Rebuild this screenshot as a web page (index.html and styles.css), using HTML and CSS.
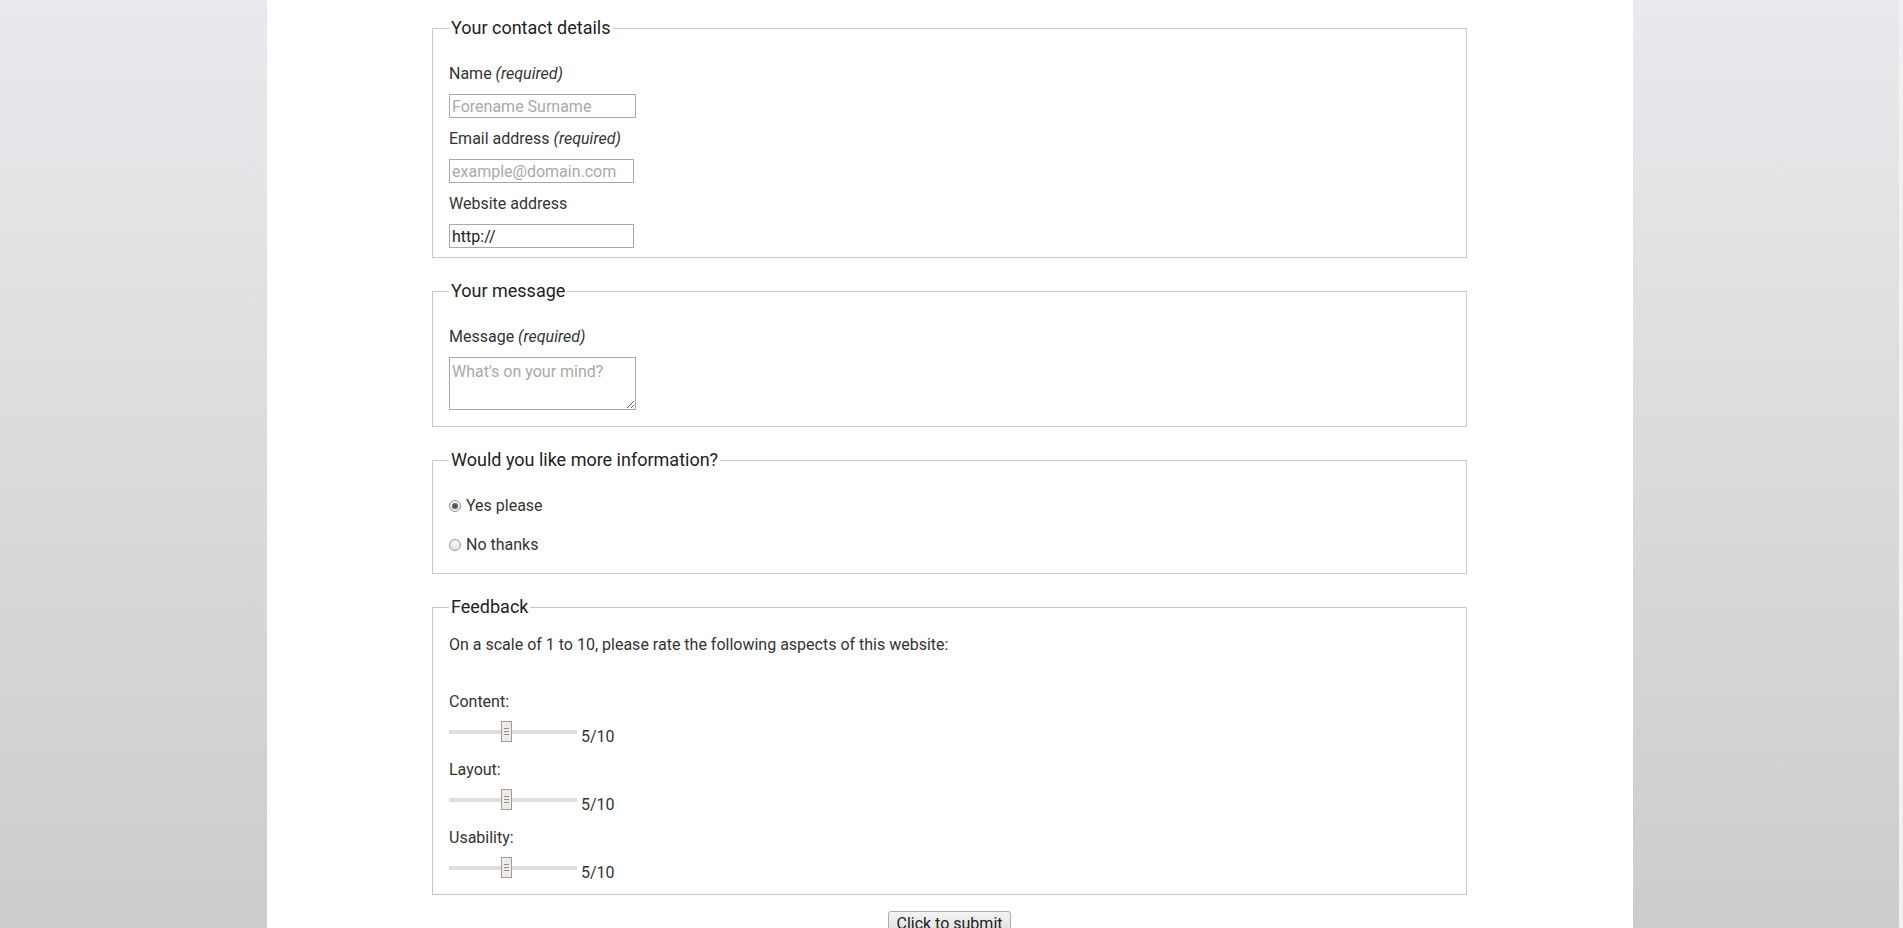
FILE: index.html
```html
<!DOCTYPE html>
<html lang="en">
<head>
  <meta charset="UTF-8" />
  <meta name="viewport" content="width=device-width, initial-scale=1.0"/>
  <title>Contact form</title>
  <link rel="stylesheet" href="styles.css">
</head>
<body>

  <div class="page">
    <form class="contact-form" action="#">

      <!-- Contact details -->
      <fieldset>
        <legend>Your contact details</legend>
        <div class="field">
          <label for="name">Name <em>(required)</em></label>
          <input type="text" id="name" class="text-input name-input" placeholder="Forename Surname">
        </div>
        <div class="field">
          <label for="email">Email address <em>(required)</em></label>
          <input type="email" id="email" class="text-input" placeholder="example@domain.com">
        </div>
        <div class="field">
          <label for="website">Website address</label>
          <input type="url" id="website" class="text-input" value="http://">
        </div>
      </fieldset>

      <!-- Message -->
      <fieldset>
        <legend>Your message</legend>
        <div class="field">
          <label for="message">Message <em>(required)</em></label>
          <textarea id="message" class="message-input" placeholder="What's on your mind?"></textarea>
        </div>
      </fieldset>

      <!-- More information -->
      <fieldset>
        <legend>Would you like more information?</legend>
        <div class="choices">
          <label class="choice"><input type="radio" name="info" class="radio" checked> Yes please</label>
          <label class="choice"><input type="radio" name="info" class="radio"> No thanks</label>
        </div>
      </fieldset>

      <!-- Feedback -->
      <fieldset class="feedback">
        <legend>Feedback</legend>
        <p class="intro">On a scale of 1 to 10, please rate the following aspects of this website:</p>

        <label for="content" class="rating-label">Content:</label>
        <div class="rating-row">
          <input type="range" id="content" class="slider" min="1" max="10" value="5"> <output>5/10</output>
        </div>

        <label for="layout" class="rating-label">Layout:</label>
        <div class="rating-row">
          <input type="range" id="layout" class="slider" min="1" max="10" value="5"> <output>5/10</output>
        </div>

        <label for="usability" class="rating-label">Usability:</label>
        <div class="rating-row">
          <input type="range" id="usability" class="slider" min="1" max="10" value="5"> <output>5/10</output>
        </div>
      </fieldset>

      <div class="submit-row">
        <button type="submit" class="submit-btn">Click to submit</button>
      </div>

    </form>
  </div>

</body>
</html>
```

FILE: styles.css
```css
html {
  min-height: 100%;
  background: linear-gradient(#e9eaed, #cccccc) fixed;
}

body {
  margin: 0;
  min-height: 100vh;
  border-right: 4px solid #f1f1f1;
  font-family: Roboto, "Liberation Sans", Arial, sans-serif;
  font-size: 16px;
  line-height: 19px;
  color: #333;
}

.page {
  width: 1366px;
  min-height: 100vh;
  margin: 0 auto;
  padding: 17px 0 24px;
  box-sizing: border-box;
  background: #fff;
}

.contact-form {
  width: 1035px;
  margin: 0 auto;
}

fieldset {
  margin: 0 0 22px;
  padding: 25px 16px 9px;
  border: 1px solid #c8c8c8;
  min-width: 0;
}

legend {
  padding: 0 2px;
  font-size: 18px;
  line-height: 22px;
  color: #222;
}

/* text fields */
.field label {
  display: block;
  margin-bottom: 11px;
}

.field + .field {
  margin-top: 11px;
}

.text-input, .message-input {
  display: block;
  margin: 0;
  width: 185px;
  height: 24px;
  padding: 1px 2px;
  box-sizing: border-box;
  border: 1px solid #a9a9a9;
  font-family: inherit;
  font-size: 16px;
  line-height: 19px;
  color: #222;
}

.name-input {
  width: 187px;
}

.message-input {
  width: 187px;
  height: 53px;
  padding: 4px 2px 2px;
  margin-bottom: 7px;
}

.text-input::placeholder, .message-input::placeholder {
  color: #a9a9a9;
}

/* radios */
.choices {
  margin-bottom: 10px;
}

.choice {
  display: block;
}

.choice + .choice {
  margin-top: 20px;
}

.radio {
  -webkit-appearance: none;
  appearance: none;
  width: 12px;
  height: 12px;
  margin: 0 1px 0 0;
  border: 1px solid #9a9a9a;
  border-radius: 50%;
  vertical-align: -1px;
  background: radial-gradient(circle at 50% 35%, #fdfdfd, #d9d9d9);
}

.radio:checked {
  background:
    radial-gradient(circle, #444 0, #5e5e5e 2px, #8a8a8a 3px, transparent 3.5px),
    radial-gradient(circle at 50% 35%, #fdfdfd, #d9d9d9);
}

/* feedback sliders */
.intro {
  margin: -8px 0 38px;
}

.rating-label {
  display: block;
  margin-bottom: 10px;
}

.rating-row {
  height: 25px;
  margin-bottom: 14px;
}

.rating-row:last-child {
  margin-bottom: 3px;
}

.slider {
  -webkit-appearance: none;
  appearance: none;
  width: 128px;
  height: 21px;
  margin: 0;
  background: transparent;
}

.slider::-webkit-slider-runnable-track {
  height: 4px;
  background: #e1ddd7;
}

.slider::-webkit-slider-thumb {
  -webkit-appearance: none;
  width: 11px;
  height: 21px;
  margin-top: -8.5px;
  box-sizing: border-box;
  border: 1px solid #a09d99;
  background:
    linear-gradient(#8f8f8f, #8f8f8f) 2px 6px / 5px 1px no-repeat,
    linear-gradient(#8f8f8f, #8f8f8f) 2px 9px / 5px 1px no-repeat,
    linear-gradient(#8f8f8f, #8f8f8f) 2px 12px / 5px 1px no-repeat,
    #eeebe7;
}

/* submit */
.contact-form .feedback {
  margin-bottom: 16px;
}

.submit-row {
  text-align: center;
}

.submit-btn {
  font-family: inherit;
  font-size: 16px;
  line-height: 19px;
  color: #222;
  padding: 2px 7px;
  border: 1px solid #acacac;
  border-radius: 3px;
  background: linear-gradient(#f4f4f4, #dcdcdc);
  cursor: pointer;
}
```
